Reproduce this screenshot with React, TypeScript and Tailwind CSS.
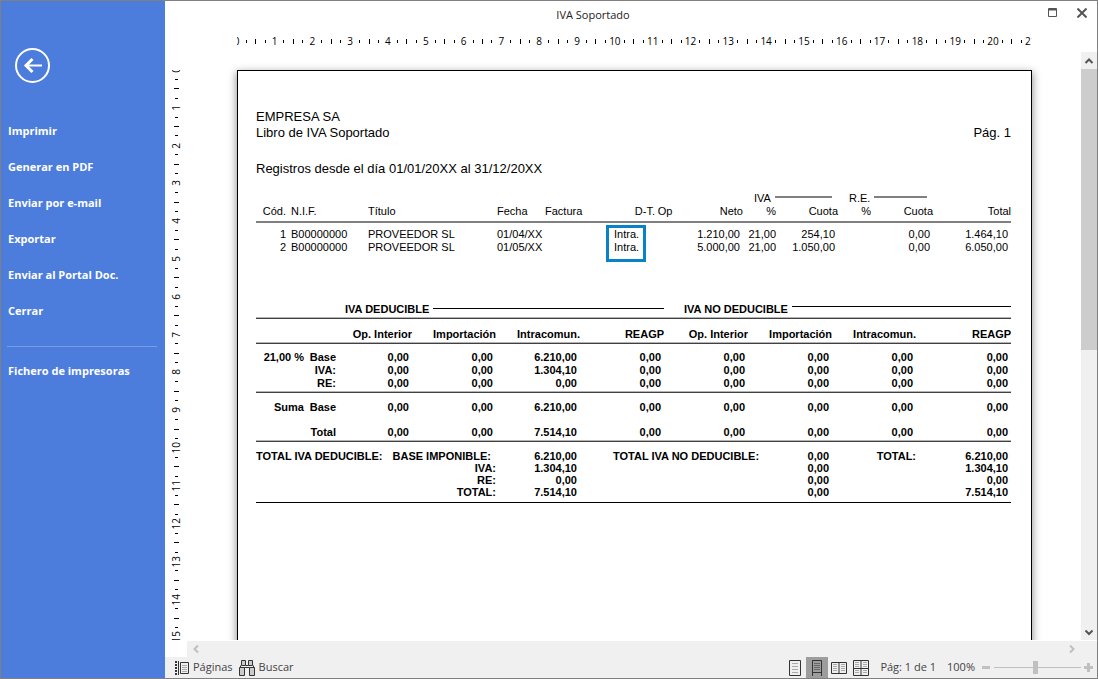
import type { ReactNode } from "react";

const ui = "font-['Open_Sans',sans-serif]";
const menu = ["Imprimir", "Generar en PDF", "Enviar por e-mail", "Exportar", "Enviar al Portal Doc.", "Cerrar"];

const rows = [
  { cod: 1, nif: "B00000000", titulo: "PROVEEDOR SL", fecha: "01/04/XX", neto: "1.210,00", iva: "21,00", cuota: "254,10", re: "0,00", total: "1.464,10" },
  { cod: 2, nif: "B00000000", titulo: "PROVEEDOR SL", fecha: "01/05/XX", neto: "5.000,00", iva: "21,00", cuota: "1.050,00", re: "0,00", total: "6.050,00" },
];

const z = "0,00";
const rule = "border-b border-[#404040] shadow-[inset_0_-1px_0_#b4b4b4]";
const summary = [
  { rate: "21,00 %", label: "Base", intra: "6.210,00", cell: "pt-[7px]" },
  { rate: "", label: "IVA:", intra: "1.304,10", cell: "" },
  { rate: "", label: "RE:", intra: z, cell: `pb-[2px] ${rule}` },
  { rate: "Suma", label: "Base", intra: "6.210,00", cell: "pt-2" },
  { rate: "", label: "Total", intra: "7.514,10", cell: `pt-3 pb-[2px] ${rule}` },
];

const totals = [
  { label: "IVA:", value: "1.304,10", last: "" },
  { label: "RE:", value: z, last: "" },
  { label: "TOTAL:", value: "7.514,10", last: "border-b border-black pb-1" },
];

const headings = ["Op. Interior", "Importación", "Intracomun.", "REAGP"];

function Ruler({ count, vertical = false }: { count: number; vertical?: boolean }) {
  return (
    <>
      {Array.from({ length: count }, (_, i) => (
        <div key={i} className={vertical ? "grid min-h-0 flex-1 grid-rows-4" : "grid min-w-0 flex-1 grid-cols-4"}>
          {[0, 1, 2, 3].map((q) => (
            <div key={q} className="flex min-h-0 min-w-0 items-center justify-center">
              {q === 0 && <span className={vertical ? "rotate-180 [writing-mode:vertical-rl]" : ""}>{i}</span>}
              {q > 0 && !vertical && <i className={q === 2 ? "h-[5px] w-px bg-black" : "h-[3px] w-px bg-black"} />}
              {q > 0 && vertical && <i className={q === 2 ? "h-px w-[5px] bg-black" : "h-px w-[3px] bg-black"} />}
            </div>
          ))}
        </div>
      ))}
    </>
  );
}

function Sidebar() {
  return (
    <nav className="flex w-[164px] shrink-0 flex-col bg-[#4d7ddc] text-[11px] font-bold text-white">
      <button aria-label="Volver" className="mt-[47px] ml-[14px] size-[35px]">
        <svg viewBox="0 0 35 35" className="size-[35px]" fill="none" stroke="white" strokeWidth="2">
          <circle cx="17.5" cy="17.5" r="16.5" />
          <path d="M10.5 17.5H27" />
          <path d="M17.500 11 11 17.500l6.500 6.500" strokeWidth="3" />
        </svg>
      </button>
      <div className="mt-[30px] flex flex-col">
        {menu.map((item) => (
          <button key={item} className="h-9 pl-[7px] text-left">{item}</button>
        ))}
      </div>
      <hr className="mt-[17px] mr-2 ml-[6px] border-[#769ae4]" />
      <button className="mt-[6px] h-9 pl-[7px] text-left">Fichero de impresoras</button>
    </nav>
  );
}

function Chevron({ d }: { d: string }) {
  return (
    <svg viewBox="0 0 10 10" className="size-[10px]" fill="none" stroke="currentColor" strokeWidth="2">
      <path d={d} />
    </svg>
  );
}

function EntriesTable() {
  return (
    <table className="mt-[15px] w-full table-fixed border-separate border-spacing-0 text-[11px] leading-[13px]">
      <colgroup>
        <col className="w-[30px]" /><col className="w-[82px]" /><col className="w-[129px]" /><col className="w-[48px]" />
        <col className="w-[69px]" /><col className="w-[41px]" /><col className="w-[20px]" /><col className="w-[68px]" />
        <col className="w-[33px]" /><col className="w-[62px]" /><col className="w-[33px]" /><col className="w-[62px]" /><col className="w-[78px]" />
      </colgroup>
      <thead className="[&_th]:p-0 [&_th]:font-normal">
        <tr>
          <th colSpan={8} />
          <th colSpan={2}>
            <div className="mr-[6px] ml-[11px] flex gap-1">IVA<span className="mt-1 h-[2px] flex-1 bg-[#808080]" /></div>
          </th>
          <th colSpan={2}>
            <div className="mr-[6px] ml-[11px] flex gap-1">R.E.<span className="mt-1 h-[2px] flex-1 bg-[#808080]" /></div>
          </th>
          <th />
        </tr>
        <tr className="text-right [&_th]:border-b-2 [&_th]:border-[#808080] [&_th]:pb-[3px]">
          <th>Cód.</th>
          <th className="text-left"><span className="pl-[5px]">N.I.F.</span></th>
          <th className="text-left">Título</th>
          <th className="text-left">Fecha</th>
          <th className="text-left">Factura</th>
          <th>D-T.</th>
          <th className="text-center">Op</th>
          <th>Neto</th>
          <th>%</th>
          <th>Cuota</th>
          <th>%</th>
          <th>Cuota</th>
          <th>Total</th>
        </tr>
      </thead>
      <tbody className="text-right [&>tr:first-child>td]:pt-[5px]">
        {rows.map((r, i) => (
          <tr key={r.cod}>
            <td>{r.cod}</td>
            <td className="pl-[5px] text-left">{r.nif}</td>
            <td className="text-left">{r.titulo}</td>
            <td className="text-left">{r.fecha}</td>
            <td />
            <td className="relative text-left">
              Intra.
              {i === 0 && <span className="absolute top-[2px] -left-2 h-[37px] w-10 border-3 border-[#0a82c8]" />}
            </td>
            <td />
            <td className="pr-[3px]">{r.neto}</td>
            <td>{r.iva}</td>
            <td className="pr-[3px]">{r.cuota}</td>
            <td />
            <td className="pr-[3px]">{r.re}</td>
            <td className="pr-[3px]">{r.total}</td>
          </tr>
        ))}
      </tbody>
    </table>
  );
}

function SummaryTable() {
  const td = (text: ReactNode, key: number, cls: string) => (
    <td key={key} className={`pr-[3px] ${cls}`}>{text}</td>
  );
  return (
    <table className="mt-[49px] w-full table-fixed border-separate border-spacing-0 text-right text-[11px] leading-[13px] font-bold">
      <colgroup>
        <col className="w-[48px]" /><col className="w-[32px]" /><col className="w-[76px]" />
        <col className="w-[84px]" /><col className="w-[84px]" /><col className="w-[84px]" />
        <col className="w-[84px]" /><col className="w-[84px]" /><col className="w-[84px]" /><col className="w-[95px]" />
      </colgroup>
      <thead>
        <tr>
          <th colSpan={2} className={rule} />
          <th colSpan={4} className={`pb-[2px] pl-[9px] ${rule}`}>
            <div className="flex gap-1">IVA DEDUCIBLE<span className="mt-[5px] h-px flex-1 bg-black" /></div>
          </th>
          <th colSpan={4} className={`pb-[2px] pl-5 ${rule}`}>
            <div className="flex gap-1">IVA NO DEDUCIBLE<span className="mt-[3px] h-px flex-1 bg-black" /></div>
          </th>
        </tr>
        <tr>
          <th colSpan={2} className={rule} />
          {[...headings, ...headings].map((h, i) => (
            <th key={i} className={`pt-[9px] pb-[2px] ${rule}`}>{h}</th>
          ))}
        </tr>
      </thead>
      <tbody>
        {summary.map((s, i) => (
          <tr key={i}>
            <td className={`whitespace-nowrap ${s.cell}`}>{s.rate}</td>
            <td className={s.cell}>{s.label}</td>
            {[z, z, s.intra, z, z, z, z, z].map((v, j) => td(v, j, s.cell))}
          </tr>
        ))}
      </tbody>
      <tbody className="leading-[12px]">
        <tr className="[&>td]:pt-2">
          <td colSpan={4}>
            <div className="flex gap-[10px] whitespace-nowrap"><span>TOTAL IVA DEDUCIBLE:</span><span>BASE IMPONIBLE:</span></div>
          </td>
          <td className="pr-[3px]">6.210,00</td>
          <td colSpan={3} className="pr-[3px] pl-[33px]">
            <div className="flex justify-between whitespace-nowrap"><span>TOTAL IVA NO DEDUCIBLE:</span><span>{z}</span></div>
          </td>
          <td>TOTAL:</td>
          <td className="pr-[3px]">6.210,00</td>
        </tr>
        {totals.map((t) => (
          <tr key={t.label}>
            <td colSpan={4} className={t.last}>{t.label}</td>
            <td className={`pr-[3px] ${t.last}`}>{t.value}</td>
            <td colSpan={3} className={`pr-[3px] ${t.last}`}>{z}</td>
            <td className={t.last} />
            <td className={`pr-[3px] ${t.last}`}>{t.value}</td>
          </tr>
        ))}
      </tbody>
    </table>
  );
}

function StatusBar() {
  return (
    <footer className="flex h-[21px] shrink-0 items-center bg-[#f0f0f0] pr-1 pl-[10px] text-[11px] text-[#444]">
      <button className="flex items-center gap-1">
        <svg viewBox="0 0 14 16" className="h-4 w-[14px]" fill="none" stroke="#333">
          <path d="M1 1v14" strokeWidth="2" strokeDasharray="2 1" />
          <path d="M3.5 1v14M5.5 2.5h8v11h-8z" />
          <path d="M7 5.500h5M7 7.500h5M7 9.500h5M7 11.500h5" stroke="#aaa" />
        </svg>
        Páginas
      </button>
      <button className="ml-[6px] flex items-center gap-1">
        <svg viewBox="0 0 16 16" className="size-4" fill="#ccc" stroke="#333">
          <path d="M2.500 .5h4v5h-4zM9.500 .5h4v5h-4zM.5 7.500h5v8h-5zM10.500 7.500h5v8h-5z" />
          <path d="M1.500 5.500v2M6.500 5.500h3M5.500 7.500h5M14.500 5.500v2" />
        </svg>
        Buscar
      </button>
      <div className="ml-auto flex h-full items-center">
        <button aria-label="Una página" className="flex w-[22px] justify-center">
          <svg viewBox="0 0 12 16" className="h-4 w-3" fill="none" stroke="#333">
            <path d="M.5 .5h11v15H.5z" />
            <path d="M3 3.500h6M3 6.500h6M3 9.500h6M3 12.500h6" stroke="#aaa" />
          </svg>
        </button>
        <button aria-label="Ancho de página" className="flex h-full w-[22px] items-center justify-center bg-[#9d9d9d]">
          <svg viewBox="0 0 12 16" className="h-4 w-3" fill="none" stroke="#333">
            <path d="M1.500 16V.5h9V16M1.500 12.500h9" />
            <path d="M3 3.500h6M3 5.500h6M3 7.500h6M3 9.500h6" stroke="#666" />
          </svg>
        </button>
        <button aria-label="Dos páginas" className="flex w-[22px] justify-center">
          <svg viewBox="0 0 16 16" className="size-4" fill="none" stroke="#333">
            <path d="M.5 2.500h15v11H.5zM8 2.500v11" />
            <path d="M2 4.500h4M2 6.500h4M2 8.500h4M2 10.500h4M10 4.500h4M10 6.500h4M10 8.500h4M10 10.500h4" stroke="#aaa" />
          </svg>
        </button>
        <button aria-label="Varias páginas" className="flex w-[22px] justify-center">
          <svg viewBox="0 0 16 16" className="size-4" fill="none" stroke="#333">
            <path d="M.5 .5h15v15H.5zM8 .5v15M.5 8.500h15" />
            <path d="M2 2.500h4M2 4.500h4M2 6.500h4M10 2.500h4M10 4.500h4M10 6.500h4M2 10.500h4M2 12.500h4M10 10.500h4M10 12.500h4" stroke="#aaa" />
          </svg>
        </button>
        <span className="ml-2">Pág: 1 de 1</span>
        <span className="ml-[11px]">100%</span>
        <button aria-label="Alejar" className="ml-[7px] h-[3px] w-2 bg-[#c0c0c0]" />
        <input
          type="range"
          aria-label="Zoom"
          defaultValue={48}
          className="ml-1 h-[13px] w-[87px] appearance-none bg-[linear-gradient(#c0c0c0,#c0c0c0)] bg-[length:100%_1px] bg-center bg-no-repeat [&::-webkit-slider-thumb]:h-[13px] [&::-webkit-slider-thumb]:w-[5px] [&::-webkit-slider-thumb]:appearance-none [&::-webkit-slider-thumb]:bg-[#c0c0c0]"
        />
        <button aria-label="Acercar" className="ml-[3px]">
          <svg viewBox="0 0 9 9" className="size-[9px]" stroke="#c0c0c0" strokeWidth="3"><path d="M0 4.500h9M4.500 0v9" /></svg>
        </button>
      </div>
    </footer>
  );
}

export default function App() {
  return (
    <div className={`flex h-screen w-full overflow-hidden border border-[#808080] bg-white ${ui}`}>
      <Sidebar />
      <main className="flex min-w-0 flex-1 flex-col">
        <header className="flex h-[29px] shrink-0 items-center">
          <h1 className="flex-1 text-center text-[11px] text-[#222]">IVA Soportado</h1>
          <div className="flex w-[76px] items-center justify-end gap-5 pr-[10px] pb-[6px]">
            <button aria-label="Maximizar">
              <svg viewBox="0 0 9 9" className="size-[9px]" fill="none" stroke="#555"><path d="M.5 .5h8v8h-8zM0 1.500h9M0 2h9" /></svg>
            </button>
            <button aria-label="Cerrar">
              <svg viewBox="0 0 10 10" className="size-[10px]" stroke="#555" strokeWidth="2"><path d="m.5 .5 9 9M9.500 .5l-9 9" /></svg>
            </button>
          </div>
        </header>
        <div className="flex h-[22px] shrink-0 justify-center pr-4 pl-[23px]">
          <div className="flex w-[795px] shrink-0 overflow-hidden">
            <div className="-ml-[5px] flex w-[832px] shrink-0 text-[10px] leading-[22px]"><Ruler count={22} /></div>
          </div>
        </div>
        <div className="mb-px flex min-h-0 flex-1">
          <div className="mt-[18px] w-[22px] shrink-0 overflow-hidden text-[10px] leading-[22px]">
            <div className="-mt-[5px] flex h-[643px] flex-col"><Ruler count={17} vertical /></div>
          </div>
          <div className="flex min-w-0 flex-1 justify-center overflow-hidden pt-[18px] pl-px">
            <article className="h-[1123px] w-[795px] shrink-0 border border-black bg-white pt-[38px] pr-5 pl-[18px] font-['Liberation_Sans',Arial,sans-serif] text-[13px] leading-4 text-black shadow-[0_3px_8px_1px_#999]">
              <p>EMPRESA SA</p>
              <div className="flex justify-between"><p>Libro de IVA Soportado</p><p>Pág. 1</p></div>
              <p className="mt-5">Registros desde el día 01/01/20XX al 31/12/20XX</p>
              <EntriesTable />
              <SummaryTable />
            </article>
          </div>
          <div className="flex w-4 shrink-0 flex-col items-center bg-[#f0f0f0] text-[#555]">
            <button aria-label="Subir" className="flex h-[17px] shrink-0 items-center"><Chevron d="m1.500 7 3.500-3.500L8.500 7" /></button>
            <div className="h-[281px] w-full bg-[#cdcdcd]" />
            <button aria-label="Bajar" className="mt-auto flex h-[17px] shrink-0 items-center"><Chevron d="M1.500 3.500 5 7l3.500-3.500" /></button>
          </div>
        </div>
        <div className="flex h-4 shrink-0 bg-[linear-gradient(90deg,white_22px,#f0f0f0_22px)] pr-4 pl-[22px]">
          <div className="flex flex-1 items-center justify-between px-1 text-[#bfbfbf]">
            <button aria-label="Izquierda"><Chevron d="M7 1.500 3.500 5 7 8.500" /></button>
            <button aria-label="Derecha"><Chevron d="M3 1.500 6.500 5 3 8.500" /></button>
          </div>
        </div>
        <StatusBar />
      </main>
    </div>
  );
}
